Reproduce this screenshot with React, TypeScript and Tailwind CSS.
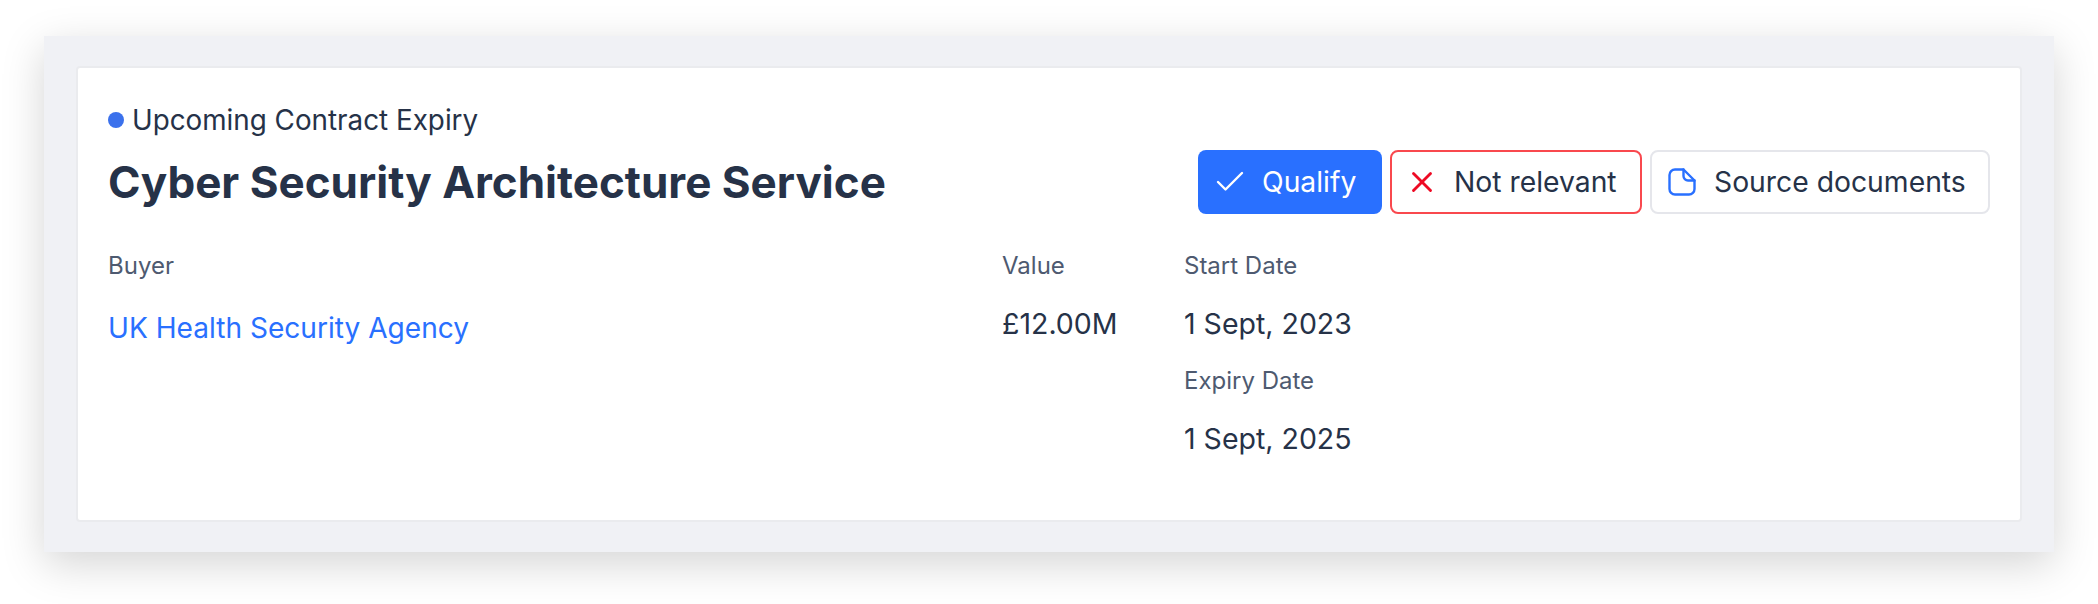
import React from "react";
import { Check, X } from "lucide-react";

function DocIcon() {
  return (
    <svg width="28" height="28" viewBox="0 0 28 28" fill="none" stroke="#2970ff" strokeWidth="2.4" strokeLinejoin="round" strokeLinecap="round">
      <path d="M7 1.500h8.500L26.500 12.500V21a5.500 5.500 0 0 1-5.500 5.500H7A5.500 5.500 0 0 1 1.500 21V7A5.500 5.500 0 0 1 7 1.500Z" />
      <path d="M15.500 1.500V8a4.500 4.500 0 0 0 4.500 4.500h6.500" />
    </svg>
  );
}

export default function App() {
  return (
    <div className="w-[2098px] h-[604px] bg-white pt-9 px-11 font-['Inter',sans-serif] overflow-hidden">
      <div className="h-[516px] bg-[#f0f1f5] py-[30px] px-8 shadow-[0_12px_40px_rgba(0,0,0,0.17)]">
        <div className="h-full bg-white border-2 border-[#eaebee] rounded-[4px] pl-[30px] pr-[30px] pt-[34px]">
          <div className="flex items-center h-[36px] text-[#263248] text-[27.8px] leading-[36px]">
            <span className="w-4 h-4 rounded-full bg-[#3b71ec] mr-2" />
            <span>Upcoming Contract Expiry</span>
          </div>
          <div className="flex items-center justify-between mt-[12px]">
            <h1 className="text-[44px] leading-[64px] font-bold text-[#263248]">Cyber Security Architecture Service</h1>
            <div className="flex gap-2 text-[28.3px] leading-[36px]">
              <button className="h-16 w-[184px] flex items-center rounded-lg bg-[#2970ff] text-white pl-[14px]">
                <Check size={36} strokeWidth={1.6} className="mr-[14px]" />
                Qualify
              </button>
              <button className="h-16 w-[252px] flex items-center rounded-lg border-2 border-[#f9484e] text-[#263248] pl-[13px]">
                <X size={34} strokeWidth={2} color="#ee0a24" className="mr-[15px]" />
                Not relevant
              </button>
              <button className="h-16 w-[340px] flex items-center rounded-lg border-2 border-[#e5e6eb] text-[#263248] pl-[16px]">
                <DocIcon />
                <span className="ml-[18px]">Source documents</span>
              </button>
            </div>
          </div>
          <div className="grid grid-cols-[894px_182px_1fr] mt-[36px]">
            <div>
              <div className="text-[#4e5a70] text-[24px] leading-[32px]">Buyer</div>
              <div className="text-[#2970ff] text-[28.1px] leading-[40px] mt-[26px]">UK Health Security Agency</div>
            </div>
            <div>
              <div className="text-[#4e5a70] text-[24px] leading-[32px]">Value</div>
              <div className="text-[#263248] text-[28.5px] leading-[36px] mt-[24px]">£12.00M</div>
            </div>
            <div>
              <div className="text-[#4e5a70] text-[24px] leading-[32px]">Start Date</div>
              <div className="text-[#263248] text-[28.5px] leading-[36px] mt-[24px]">1 Sept, 2023</div>
              <div className="text-[#4e5a70] text-[24px] leading-[32px] mt-[23px]">Expiry Date</div>
              <div className="text-[#263248] text-[28.5px] leading-[36px] mt-[24px]">1 Sept, 2025</div>
            </div>
          </div>
        </div>
      </div>
    </div>
  );
}
